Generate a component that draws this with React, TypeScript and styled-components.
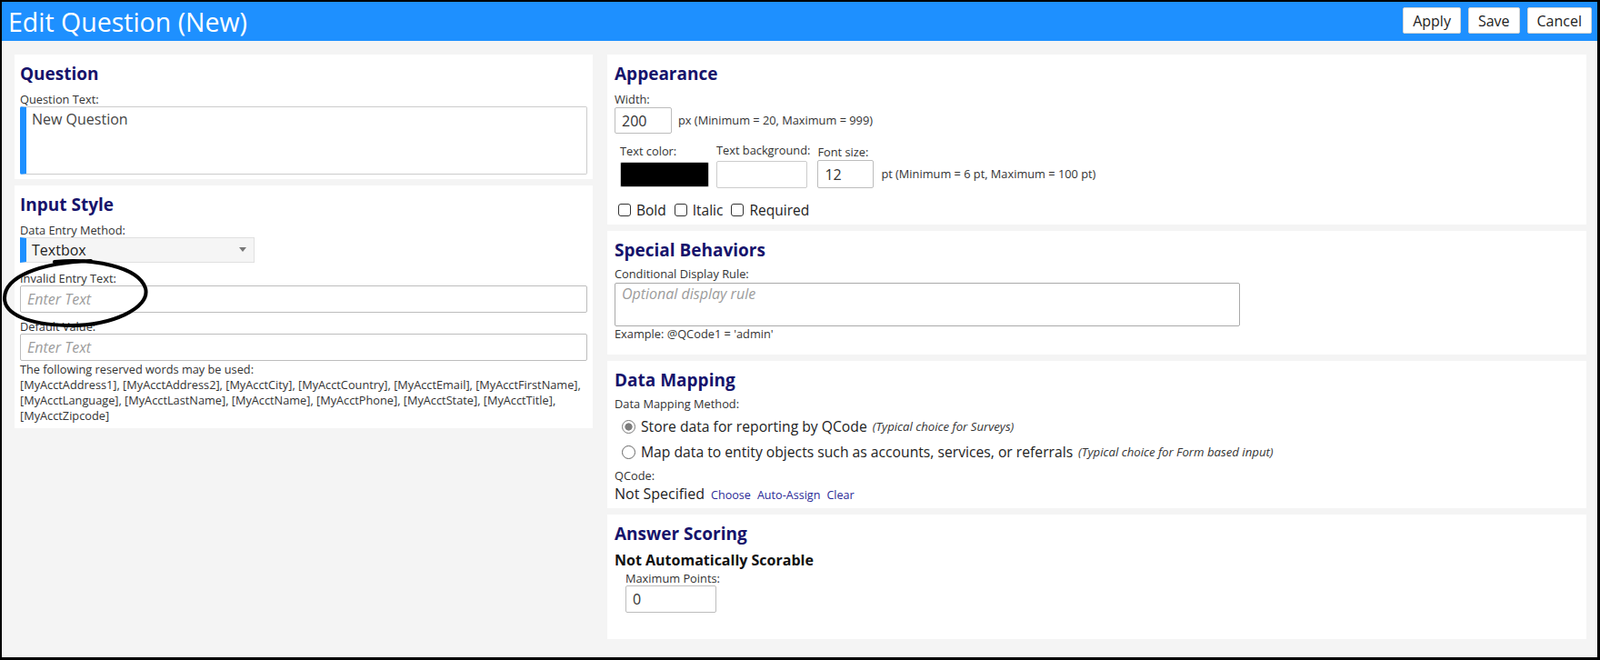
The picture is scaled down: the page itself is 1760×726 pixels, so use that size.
import React from 'react';
import styled, { createGlobalStyle } from 'styled-components';

const GlobalStyle = createGlobalStyle`
  html, body {
    margin: 0;
    padding: 0;
  }
  body {
    font-family: 'Open Sans', 'Noto Sans', sans-serif;
    color: #222;
    background: #fff;
  }
  * {
    box-sizing: border-box;
  }
`;

const RESERVED_WORDS = [
    '[MyAcctAddress1], [MyAcctAddress2], [MyAcctCity], [MyAcctCountry], [MyAcctEmail], [MyAcctFirstName],',
    '[MyAcctLanguage], [MyAcctLastName], [MyAcctName], [MyAcctPhone], [MyAcctState], [MyAcctTitle],',
    '[MyAcctZipcode]',
];

export default function App() {
    return (
        <>
            <GlobalStyle />
            <Frame>
                <Header>
                    <Title>Edit Question (New)</Title>
                    <HeaderActions>
                        <HeaderButton>Apply</HeaderButton>
                        <HeaderButton>Save</HeaderButton>
                        <HeaderButton>Cancel</HeaderButton>
                    </HeaderActions>
                </Header>

                <Workspace>
                    <Column>
                        <Panel $inset={6}>
                            <PanelTitle>Question</PanelTitle>
                            <FieldLabel>Question Text:</FieldLabel>
                            <AccentArea defaultValue="New Question" />
                        </Panel>

                        <Panel $inset={6}>
                            <PanelTitle>Input Style</PanelTitle>
                            <FieldLabel>Data Entry Method:</FieldLabel>
                            <AccentSelect>
                                Textbox
                                <Caret />
                            </AccentSelect>
                            <FieldLabel $top={10}>Invalid Entry Text:</FieldLabel>
                            <TextInput placeholder="Enter Text" />
                            <FieldLabel $top={8}>Default Value:</FieldLabel>
                            <TextInput placeholder="Enter Text" />
                            <ReservedNote>
                                The following reserved words may be used:
                                {RESERVED_WORDS.map((line) => (
                                    <ReservedLine key={line}>{line}</ReservedLine>
                                ))}
                            </ReservedNote>
                        </Panel>
                    </Column>

                    <Column>
                        <Panel>
                            <PanelTitle>Appearance</PanelTitle>
                            <FieldLabel>Width:</FieldLabel>
                            <InlineRow>
                                <TextInput $width={63} $height={29} defaultValue="200" />
                                <Hint>px (Minimum = 20, Maximum = 999)</Hint>
                            </InlineRow>

                            <StyleRow>
                                <StyleCell>
                                    <CellLabel>Text color:</CellLabel>
                                    <Swatch $color="#000" />
                                </StyleCell>
                                <StyleCell>
                                    <CellLabel>Text background:</CellLabel>
                                    <Swatch $color="#fff" $tall />
                                </StyleCell>
                                <StyleCell>
                                    <CellLabel $gap={1}>Font size:</CellLabel>
                                    <TextInput $width={62} $height={31} defaultValue="12" />
                                </StyleCell>
                                <Hint $line={31}>pt (Minimum = 6 pt, Maximum = 100 pt)</Hint>
                            </StyleRow>

                            <CheckRow>
                                <CheckItem>
                                    <Check />
                                    Bold
                                </CheckItem>
                                <CheckItem>
                                    <Check />
                                    Italic
                                </CheckItem>
                                <CheckItem>
                                    <Check />
                                    Required
                                </CheckItem>
                            </CheckRow>
                        </Panel>

                        <Panel>
                            <PanelTitle $gap={5}>Special Behaviors</PanelTitle>
                            <FieldLabel>Conditional Display Rule:</FieldLabel>
                            <RuleArea placeholder="Optional display rule" />
                            <Example>Example: @QCode1 = 'admin'</Example>
                        </Panel>

                        <Panel>
                            <PanelTitle $gap={5}>Data Mapping</PanelTitle>
                            <FieldLabel>Data Mapping Method:</FieldLabel>
                            <RadioList>
                                <RadioItem>
                                    <Radio name="mapping" defaultChecked />
                                    Store data for reporting by QCode
                                    <RadioNote>(Typical choice for Surveys)</RadioNote>
                                </RadioItem>
                                <RadioItem>
                                    <Radio name="mapping" />
                                    Map data to entity objects such as accounts, services, or referrals
                                    <RadioNote>(Typical choice for Form based input)</RadioNote>
                                </RadioItem>
                            </RadioList>
                            <FieldLabel $top={5}>QCode:</FieldLabel>
                            <QCodeRow>
                                <QCodeValue>Not Specified</QCodeValue>
                                <ActionLink>Choose</ActionLink>
                                <ActionLink>Auto-Assign</ActionLink>
                                <ActionLink>Clear</ActionLink>
                            </QCodeRow>
                        </Panel>

                        <Panel>
                            <PanelTitle $gap={5}>Answer Scoring</PanelTitle>
                            <Subhead>Not Automatically Scorable</Subhead>
                            <ScoreField>
                                <FieldLabel>Maximum Points:</FieldLabel>
                                <TextInput $width={100} defaultValue="0" />
                            </ScoreField>
                        </Panel>
                    </Column>
                </Workspace>

                <Annotation viewBox="0 0 166 82" aria-hidden="true">
                    <path
                        d="M58 5 C100 1 150 10 158 34 C164 56 120 76 72 75 C28 74 3 62 3 45 C3 22 40 6 98 4"
                        fill="none"
                        stroke="#000"
                        strokeWidth="4"
                        strokeLinecap="round"
                    />
                </Annotation>
            </Frame>
        </>
    );
}

const Frame = styled.div`
    position: relative;
    width: 1760px;
    height: 726px;
    border: solid #000;
    border-width: 2px 3px 3px 2px;
    background: #f4f4f4;
    overflow: hidden;
`;

const Header = styled.header`
    display: flex;
    align-items: flex-start;
    justify-content: space-between;
    height: 43px;
    padding: 0 6px 0 7px;
    background: #1e90ff;
`;

const Title = styled.h1`
    margin: 0;
    font-size: 28.5px;
    font-weight: 400;
    line-height: 44px;
    color: #fff;
`;

const HeaderActions = styled.div`
    display: flex;
    gap: 8px;
    padding-top: 6px;
`;

const HeaderButton = styled.button`
    height: 29px;
    padding: 0 10px;
    border: 1px solid #d4d4d4;
    border-radius: 2px;
    background: #fff;
    font-family: inherit;
    font-size: 16px;
    color: #222;
    cursor: pointer;
`;

const Workspace = styled.main`
    display: grid;
    grid-template-columns: 636px 1077px;
    column-gap: 16px;
    align-items: start;
    padding: 15px 12px 0 14px;
`;

const Column = styled.div`
    display: flex;
    flex-direction: column;
    gap: 7px;
`;

const Panel = styled.section<{ $inset?: number }>`
    background: #fff;
    padding: 7px ${(p) => p.$inset ?? 8}px 5px;
`;

const PanelTitle = styled.h2<{ $gap?: number }>`
    margin: 0 0 ${(p) => p.$gap ?? 7}px;
    font-size: 19px;
    font-weight: 700;
    line-height: 28px;
    color: #16136b;
`;

const FieldLabel = styled.label<{ $top?: number }>`
    display: block;
    margin-top: ${(p) => p.$top ?? 0}px;
    font-size: 12.8px;
    line-height: 15px;
    color: #333;
`;

const AccentArea = styled.textarea`
    display: block;
    width: 100%;
    height: 75px;
    resize: none;
    border: 1px solid #ccc;
    border-left: 7px solid #1e90ff;
    border-radius: 2px;
    padding: 3px 6px;
    font-family: inherit;
    font-size: 16px;
    line-height: 20px;
    color: #444;
`;

const AccentSelect = styled.div`
    display: flex;
    align-items: center;
    justify-content: space-between;
    width: 258px;
    height: 28px;
    padding: 0 8px 0 6px;
    border: 1px solid #e0e0e0;
    border-left: 7px solid #1e90ff;
    background: #f5f5f5;
    font-size: 16px;
    color: #222;
`;

const Caret = styled.span`
    width: 0;
    height: 0;
    margin-top: -2px;
    border-left: 4.5px solid transparent;
    border-right: 4.5px solid transparent;
    border-top: 5px solid #777;
`;

const TextInput = styled.input<{ $width?: number; $height?: number }>`
    display: block;
    width: ${(p) => (p.$width ? `${p.$width}px` : '100%')};
    height: ${(p) => p.$height ?? 30}px;
    padding: 0 7px;
    border: 1px solid #bdbdbd;
    border-radius: 2px;
    background: #fff;
    font-family: inherit;
    font-size: 16px;
    color: #333;

    &::placeholder {
        color: #9c9c9c;
        font-style: italic;
    }
`;

const ReservedNote = styled.div`
    margin-top: 1px;
    font-size: 12.75px;
    line-height: 17px;
    color: #333;
`;

const ReservedLine = styled.div`
    white-space: nowrap;
`;

const InlineRow = styled.div`
    display: flex;
    align-items: center;
    gap: 7px;
    margin-top: 1px;
`;

const Hint = styled.span<{ $line?: number }>`
    font-size: 12.8px;
    line-height: ${(p) => p.$line ?? 15}px;
    color: #333;
`;

const StyleRow = styled.div`
    display: flex;
    align-items: flex-end;
    margin-top: 11px;
    padding-left: 6px;
    gap: 8px;
`;

const StyleCell = styled.div`
    display: flex;
    flex-direction: column;
`;

const CellLabel = styled.span<{ $gap?: number }>`
    margin-bottom: ${(p) => p.$gap ?? 4}px;
    font-size: 12.8px;
    line-height: 15px;
    color: #333;
    white-space: nowrap;
`;

const Swatch = styled.div<{ $color: string; $tall?: boolean }>`
    width: ${(p) => (p.$tall ? 100 : 98)}px;
    height: ${(p) => (p.$tall ? 30 : 28)}px;
    margin-bottom: ${(p) => (p.$tall ? 0 : 1)}px;
    border: 1px solid #ccc;
    border-radius: 2px;
    background: ${(p) => p.$color};
`;

const CheckRow = styled.div`
    display: flex;
    align-items: center;
    gap: 9px;
    margin: 14px 0 1px;
    padding-left: 4px;
`;

const CheckItem = styled.label`
    display: flex;
    align-items: center;
    gap: 6px;
    font-size: 15.5px;
    line-height: 20px;
    color: #222;
`;

const Check = styled.input.attrs({ type: 'checkbox' })`
    appearance: none;
    margin: 0;
    width: 14px;
    height: 14px;
    border: 1px solid #333;
    border-radius: 3px;
    background: #fff;
`;

const RuleArea = styled.textarea`
    display: block;
    width: 688px;
    height: 48px;
    margin-top: 2px;
    resize: none;
    padding: 1px 7px;
    border: 1px solid #aaa;
    border-radius: 2px;
    font-family: inherit;
    font-size: 16px;
    line-height: 20px;

    &::placeholder {
        color: #9c9c9c;
        font-style: italic;
    }
`;

const Example = styled.div`
    margin: 1px 0 10px;
    font-size: 12.8px;
    line-height: 15px;
    color: #333;
`;

const RadioList = styled.div`
    display: flex;
    flex-direction: column;
    margin-top: 3px;
`;

const RadioItem = styled.label`
    display: flex;
    align-items: center;
    gap: 6px;
    padding-left: 8px;
    font-size: 15.7px;
    line-height: 28px;
    color: #222;
`;

const Radio = styled.input.attrs({ type: 'radio' })`
    appearance: none;
    flex: none;
    margin: 0;
    width: 15px;
    height: 15px;
    border: 1px solid #666;
    border-radius: 50%;
    background: #fff;

    &:checked {
        border-color: #777;
        background: radial-gradient(circle, #7d7d7d 0 3.8px, #fff 4.4px);
    }
`;

const RadioNote = styled.em`
    font-size: 13.2px;
    color: #333;
`;

const QCodeRow = styled.div`
    display: flex;
    align-items: baseline;
    gap: 7px;
    margin: 2px 0 1px;
`;

const QCodeValue = styled.span`
    font-size: 16px;
    line-height: 20px;
    color: #222;
`;

const ActionLink = styled.a`
    font-size: 12.6px;
    color: #2b2a97;
    cursor: pointer;
`;

const Subhead = styled.div`
    font-size: 16px;
    font-weight: 700;
    line-height: 20px;
    color: #111;
`;

const ScoreField = styled.div`
    margin: 3px 0 24px;
    padding-left: 12px;
`;

const Annotation = styled.svg`
    position: absolute;
    left: 0;
    top: 281px;
    width: 166px;
    height: 82px;
    overflow: visible;
    pointer-events: none;
`;
